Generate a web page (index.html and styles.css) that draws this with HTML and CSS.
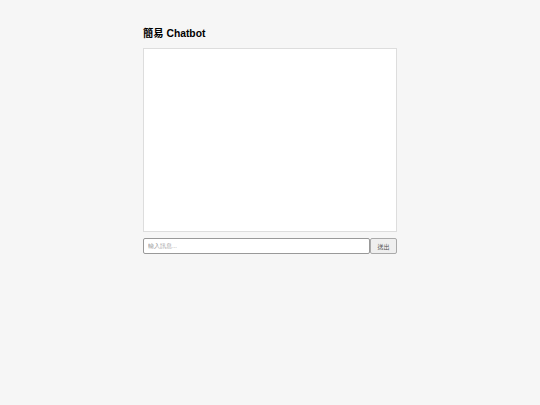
FILE: index.html
```html
<!DOCTYPE html>
<html lang="zh-Hant">
<head>
<meta charset="utf-8">
<link rel="stylesheet" href="styles.css">
</head>
<body>
<div class="app">
  <h2 class="title">簡易 Chatbot</h2>
  <div class="chat"></div>
  <div class="input-row">
    <input class="msg" type="text" placeholder="輸入訊息...">
    <button class="send">送出</button>
  </div>
</div>
</body>
</html>
```
FILE: styles.css
```css
html, body {
  margin: 0;
  padding: 0;
  background: #f6f6f6;
  font-family: "Liberation Sans", Arial, "Noto Sans CJK TC", sans-serif;
}
.app {
  width: 254px;
  margin: 0 auto;
  padding-top: 28px;
}
.title {
  margin: 0 0 8px 0;
  font-size: 10.3px;
  line-height: 12px;
  font-weight: bold;
  color: #000;
}
.chat {
  height: 182px;
  background: #fff;
  border: 1px solid #ddd;
}
.input-row {
  display: flex;
  margin-top: 6px;
  height: 16px;
}
.msg {
  flex: 1;
  min-width: 0;
  box-sizing: border-box;
  height: 16px;
  margin: 0;
  padding: 0 4px;
  border: 1px solid #999;
  border-radius: 2px;
  font-size: 6px;
  background: #fff;
  outline: none;
}
.msg::placeholder {
  color: #999;
}
.send {
  box-sizing: border-box;
  width: 27px;
  height: 16px;
  margin: 0;
  padding: 0;
  border: 1px solid #aaa;
  border-radius: 2px;
  background: #efefef;
  font-size: 6px;
  color: #555;
  font-family: "Liberation Sans", Arial, "Noto Sans CJK TC", sans-serif;
}
```
